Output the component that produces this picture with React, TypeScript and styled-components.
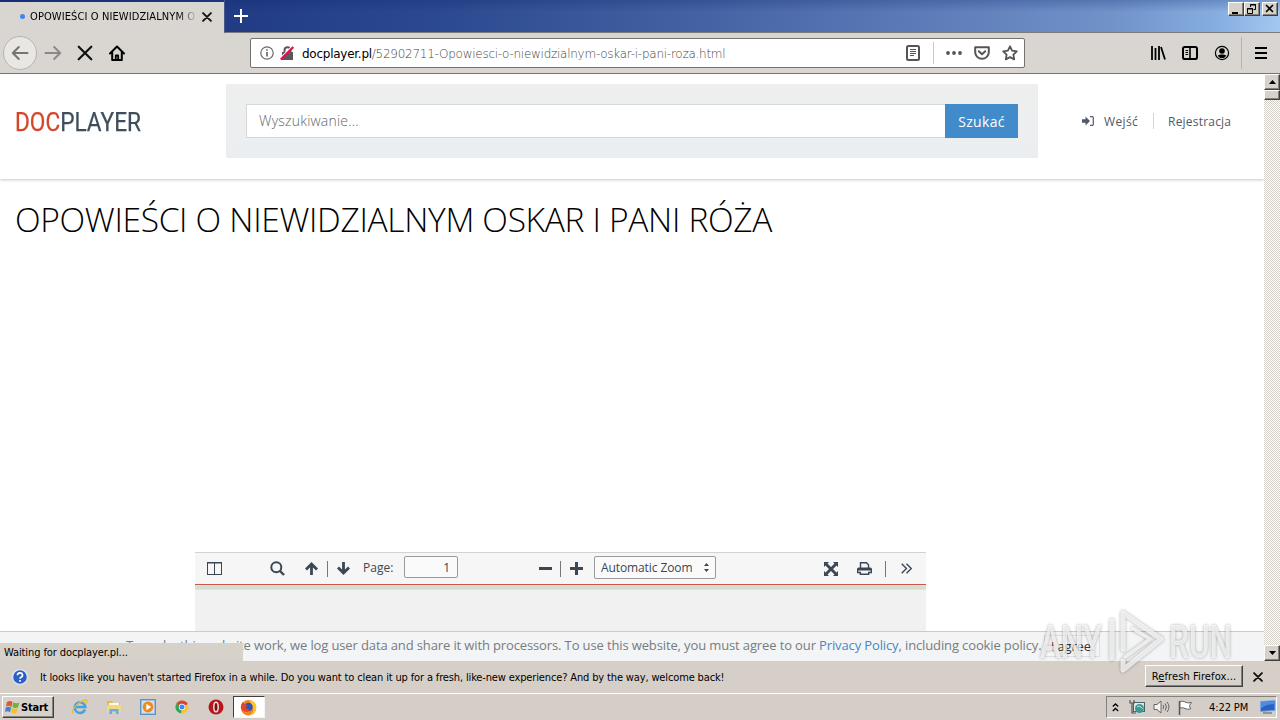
import React from "react";
import styled, { createGlobalStyle, css } from "styled-components";

const Global = createGlobalStyle`
  * { box-sizing: border-box; }
  body { margin: 0; background: #d4d0c8; overflow: hidden; }
`;

const ui = `"DejaVu Sans Condensed", "Noto Sans", sans-serif`;
const web = `"Open Sans", "Noto Sans", sans-serif`;

const Screen = styled.div`
  position: relative;
  width: 1280px;
  height: 720px;
  display: flex;
  flex-direction: column;
  overflow: hidden;
  font-family: ${ui};
  font-size: 11px;
  color: #000;
`;

const Label = styled.span<{ $ls?: number; $size?: number }>`
  white-space: pre;
  letter-spacing: ${(p) => p.$ls ?? 0}px;
  ${(p) => p.$size && css`font-size: ${p.$size}px;`}
`;

const Spacer = styled.div<{ $w?: number }>`
  flex: ${(p) => (p.$w === undefined ? "1" : `0 0 ${p.$w}px`)};
`;

/* ---------- window frame ---------- */
const TitleBar = styled.div`
  display: flex;
  height: 33px;
  background: linear-gradient(to bottom, rgba(10, 36, 106, 0.25), rgba(10, 36, 106, 0) 12px),
    linear-gradient(92deg, #16327a 0%, #213c84 18%, #2c4a90 35%, #4562a4 55%, #5d7bb8 72%, #7093c9 87%, #86ade0 95%, #a3c8f0 100%);
`;

const Tab = styled.div`
  display: flex;
  align-items: center;
  width: 224px;
  height: 31px;
  margin-top: 2px;
  padding: 0 10px 2px 20px;
  background: #d9d6d1;
`;

const TabRest = styled.div`
  flex: 1;
  display: flex;
  border-bottom: 1px solid #7c7c7c;
  border-left: 1px solid #47598c;
`;

const Dot = styled.i`
  width: 5px;
  height: 5px;
  margin-right: 5px;
  border-radius: 50%;
  background: #3f86f2;
`;

const TabTitle = styled.div`
  width: 165px;
  overflow: hidden;
  mask-image: linear-gradient(to right, #000 148px, transparent 168px);
`;

const NewTab = styled.div`
  padding: 8px 0 0 8px;
`;

const WinButtons = styled.div`
  display: flex;
  padding: 2px 2px 0 0;
`;

const raised = css`
  background: #d6d2cb;
  border: 1px solid;
  border-color: #fff #404040 #404040 #fff;
  box-shadow: inset -1px -1px 0 #85827c;
`;

const WinButton = styled.div<{ $gap?: boolean }>`
  ${raised}
  width: 16px;
  height: 14px;
  margin-left: ${(p) => (p.$gap ? 2 : 0)}px;
  svg { display: block; }
`;

const NavBar = styled.div`
  display: flex;
  align-items: center;
  height: 41px;
  border-bottom: 1px solid #75736f;
  background: #d9d6d1;
  padding-left: 3px;
  svg { display: block; }
`;

const BackButton = styled.div`
  display: grid;
  place-items: center;
  width: 34px;
  height: 34px;
  border: 1px solid #b8b5b0;
  border-radius: 50%;
  background: #e9e7e4;
`;

const UrlBar = styled.div`
  display: flex;
  align-items: center;
  width: 775px;
  height: 30px;
  padding: 0 6px 0 9px;
  border: 1px solid #74726e;
  border-radius: 2px;
  background: #fff;
`;

const UrlText = styled.div`
  flex: 1;
  margin: 1px 0 0 7px;
  font-family: "DejaVu Sans", sans-serif;
  font-size: 12px;
  font-weight: 200;
  color: #444;
  white-space: nowrap;
  letter-spacing: -0.26px;
  b { font-weight: 400; color: #000; }
`;

const VLine = styled.i<{ $h: number; $c: string }>`
  width: 1px;
  height: ${(p) => p.$h}px;
  background: ${(p) => p.$c};
`;

/* ---------- page ---------- */
const Viewport = styled.div`
  position: relative;
  display: flex;
  height: 587px;
`;

const Page = styled.div`
  flex: 1;
  display: flex;
  flex-direction: column;
  background: #fff;
  font-family: ${web};
  overflow: hidden;
`;

const Header = styled.header`
  display: flex;
  flex: 0 0 105px;
  padding: 10px 0 0 15px;
  box-shadow: 0 1px 3px rgba(0, 0, 0, 0.22);
`;

const Logo = styled.div`
  width: 211px;
  padding-top: 22px;
  font-family: Roboto, sans-serif;
  font-size: 25px;
  line-height: 33px;
  color: #3e4e5c;
  -webkit-text-stroke: 0.25px;
  span { display: inline-block; transform: scaleX(0.905); transform-origin: 0 50%; white-space: nowrap; }
  em { font-style: normal; color: #d4462a; }
`;

const SearchPanel = styled.div`
  display: flex;
  width: 812px;
  height: 74px;
  padding: 20px;
  background: linear-gradient(#eeeeee, #ebeef1);
`;

const SearchInput = styled.div`
  flex: 1;
  padding-left: 12px;
  border: 1px solid #d5d7d9;
  border-right: 0;
  background: #fff;
  font-size: 14px;
  font-weight: 300;
  line-height: 32px;
  color: #666;
  letter-spacing: 0.2px;
`;

const SearchButton = styled.div`
  width: 73px;
  background: #428bca;
  color: #fff;
  font-size: 14px;
  line-height: 35px;
  letter-spacing: 0.3px;
  text-align: center;
`;

const Account = styled.div`
  display: flex;
  align-items: center;
  height: 74px;
  padding-left: 44px;
  font-size: 12px;
  color: #4f5a66;
`;

const Title = styled.h1`
  flex: 1;
  margin: 0;
  padding: 16px 0 0 15px;
  font-size: 33.5px;
  line-height: 48px;
  font-weight: 300;
  letter-spacing: -0.32px;
  color: #000;
  white-space: nowrap;
`;

const Viewer = styled.section`
  width: 731px;
  height: 109px;
  margin-left: 195px;
  background: #f1f1f1;
`;

const ViewerBar = styled.div`
  display: flex;
  align-items: center;
  height: 33px;
  padding: 0 12px;
  border-top: 1px solid #d2d2d2;
  border-bottom: 1px solid #d0534a;
  background: #f6f6f6;
  font-size: 12px;
  color: #3b4754;
  svg { display: block; }
`;

const ViewerShade = styled.div`
  height: 5px;
  background: linear-gradient(#f3dcd6 0 1px, #d3dfd0 1px 4px, #e8e0e0 4px);
`;

const PageNumber = styled.div`
  width: 54px;
  height: 22px;
  margin-bottom: 3px;
  padding-right: 7px;
  border: 1px solid #9a9a9a;
  border-radius: 2px;
  background: #fafafa;
  line-height: 21px;
  text-align: right;
`;

const ZoomSelect = styled.div`
  display: flex;
  align-items: center;
  justify-content: space-between;
  width: 122px;
  height: 23px;
  margin-bottom: 3px;
  padding: 1px 5px 0 6px;
  border: 1px solid #9a9a9a;
  border-radius: 2px;
  background: #fafafa;
`;

const PageLabel = styled.div`
  padding-bottom: 2px;
`;

const CookieBar = styled.div`
  position: absolute;
  left: 0;
  bottom: 0;
  display: flex;
  width: 1264px;
  height: 30px;
  padding-left: 126px;
  border-top: 1px solid #c9cbcc;
  background: rgba(243, 244, 245, 0.96);
  font-family: ${web};
  font-size: 13px;
  line-height: 27px;
  color: #777c80;
  a { color: #4a88c4; }
`;

const Agree = styled.div`
  width: 56px;
  height: 22px;
  margin: 3px 0 0 3px;
  border: 1px solid #dedede;
  background: #f6f6f6;
  line-height: 20px;
  letter-spacing: -0.2px;
  text-align: center;
  color: #333;
`;

const StatusBubble = styled.div`
  position: absolute;
  left: 0;
  bottom: 0;
  width: 243px;
  height: 18px;
  padding-left: 4px;
  background: #d6d2c9;
  line-height: 20px;
`;

const ScrollTrack = styled.div`
  display: flex;
  flex-direction: column;
  width: 16px;
  background: repeating-conic-gradient(#ffffff 0 25%, #d4d0c8 0 50%) 0 0 / 2px 2px;
`;

const ScrollButton = styled.div<{ $h: number }>`
  ${raised}
  display: grid;
  place-items: center;
  height: ${(p) => p.$h}px;
`;

/* ---------- notification and taskbar ---------- */
const Notice = styled.div`
  display: flex;
  align-items: center;
  height: 32px;
  padding: 0 15px 0 12px;
  background: #d6cfc8;
`;

const NoticeButton = styled.div`
  ${raised}
  width: 98px;
  height: 22px;
  margin: -2px 0 0;
  line-height: 21px;
  text-align: center;
`;

const Taskbar = styled.div`
  display: flex;
  align-items: center;
  height: 27px;
  padding: 0 3px 0 2px;
  border-top: 1px solid #fff;
  background: #d5cec8;
  svg { display: block; }
`;

const StartButton = styled.div`
  ${raised}
  display: flex;
  align-items: center;
  width: 52px;
  height: 22px;
  padding-left: 2px;
  font-weight: 700;
`;

const TaskIcon = styled.div<{ $active?: boolean }>`
  display: grid;
  place-items: center;
  width: 34px;
  height: 22px;
  padding-right: 1px;
  ${(p) =>
    p.$active &&
    css`
      width: 32px;
      background: #fff;
      border: 1px solid;
      border-color: #404040 #f5f5f5 #f5f5f5 #404040;
    `}
`;

const Tray = styled.div`
  display: flex;
  align-items: center;
  width: 171px;
  height: 22px;
  padding-left: 5px;
  border: 1px solid;
  border-color: #85827c #fff #fff #85827c;
`;

const Watermark = styled.div`
  position: absolute;
  left: 1036px;
  top: 604px;
  display: flex;
  svg { filter: drop-shadow(0 0 1.5px rgba(0, 0, 0, 0.45)); }
`;

const Arrow = ({ flip }: { flip?: boolean }) => (
  <svg width="18" height="16" viewBox="0 0 18 16" fill="none" stroke={flip ? "#8b8986" : "#777572"} strokeWidth="2" strokeLinecap="round" strokeLinejoin="round">
    {flip ? <path d="M1.5 8H16M10.2 2l6 6-6 6" /> : <path d="M16.5 8H2M7.8 2l-6 6 6 6" />}
  </svg>
);

const Cross = ({ s, w = 2 }: { s: number; w?: number }) => (
  <svg width={s} height={s} viewBox="0 0 14 14" stroke="#111" strokeWidth={w} strokeLinecap="round">
    <path d="M1.5 1.5l11 11M12.5 1.5l-11 11" />
  </svg>
);

export default function App() {
  return (
    <>
      <Global />
      <Screen>
        <TitleBar>
          <Tab>
            <Dot />
            <TabTitle><Label $ls={0.1}>OPOWIEŚCI O NIEWIDZIALNYM O</Label></TabTitle>
            <Spacer $w={7} />
            <Cross s={10} w={2.6} />
          </Tab>
          <TabRest>
            <NewTab>
              <svg width="16" height="16" stroke="#fff" strokeWidth="2"><path d="M8 1v14M1 8h14" /></svg>
            </NewTab>
            <Spacer />
            <WinButtons>
              <WinButton><svg width="14" height="12"><path d="M3 9h6v2H3z" /></svg></WinButton>
              <WinButton>
                <svg width="14" height="12" fill="none" stroke="#000"><path d="M5.5 4V1.5h5v5H8.500M5 2h6M2.5 5.5h5v5h-5zM2 6h6" /></svg>
              </WinButton>
              <WinButton $gap><svg width="14" height="12" stroke="#000" strokeWidth="1.6"><path d="M3 2l7 7M10 2L3 9" /></svg></WinButton>
            </WinButtons>
          </TabRest>
        </TitleBar>

        <NavBar>
          <BackButton><Arrow /></BackButton>
          <Spacer $w={7} />
          <Arrow flip />
          <Spacer $w={15} />
          <Cross s={16} w={1.9} />
          <Spacer $w={16} />
          <svg width="16" height="16" viewBox="0 0 16 16" fill="none" stroke="#000" strokeWidth="2" strokeLinejoin="round" strokeLinecap="round">
            <path d="M1 8.5L8 1.5l7 7M3.2 7.5V15h9.6V7.5" />
            <path d="M6.8 14.5v-4h2.4v4" strokeWidth="1.8" />
          </svg>
          <Spacer $w={125} />
          <UrlBar>
            <svg width="14" height="14" fill="none" stroke="#6b6b6b" strokeWidth="1.2"><circle cx="7" cy="7" r="6.2" /><path d="M7 6v4.5M7 3.2v1.6" strokeWidth="1.7" /></svg>
            <Spacer $w={6} />
            <svg width="15" height="16" viewBox="0 0 15 16">
              <path d="M4.500 8V5.200a3 3 0 0 1 6 0V8" fill="none" stroke="#5a5a5a" strokeWidth="2" />
              <path d="M2 7h11v8H2z" fill="#5a5a5a" />
              <path d="M0 13.500L12.500 1" stroke="#fff" strokeWidth="1.500" />
              <path d="M.8 14.500L13.300 2" stroke="#e0124e" strokeWidth="2.300" />
            </svg>
            <UrlText><b>docplayer.pl</b>/52902711-Opowiesci-o-niewidzialnym-oskar-i-pani-roza.html</UrlText>
            <svg width="14" height="16" fill="none" stroke="#555"><rect x="1" y="1" width="12" height="14" rx="1.5" strokeWidth="2" /><path d="M4 4.5h6M4 6.5h6M4 8.5h6M4 10.5h4" /></svg>
            <Spacer $w={13} />
            <VLine $h={22} $c="#c9c9c9" />
            <Spacer $w={12} />
            <svg width="16" height="4" fill="#555"><circle cx="2" cy="2" r="1.9" /><circle cx="8" cy="2" r="1.9" /><circle cx="14" cy="2" r="1.9" /></svg>
            <Spacer $w={12} />
            <svg width="16" height="14" fill="none" stroke="#555" strokeWidth="2" strokeLinecap="round" strokeLinejoin="round"><path d="M1.2 1.2h13.6v5a6.8 6.6 0 0 1-13.6 0zM4.8 5.2L8 8.2l3.2-3" /></svg>
            <Spacer $w={12} />
            <svg width="16" height="16" viewBox="0 0 16 16" fill="none" stroke="#555" strokeWidth="1.8" strokeLinejoin="round"><path d="M8 1.3l2.1 4.3 4.7.7-3.4 3.3.8 4.8L8 12.1l-4.2 2.3.8-4.8L1.2 6.3l4.7-.7z" /></svg>
          </UrlBar>
          <Spacer />
          <svg width="16" height="14" stroke="#000"><path d="M2 0v14M5.500 2v12M9 0v14M11 1l4 12.500" strokeWidth="1.8" /></svg>
          <Spacer $w={16} />
          <svg width="16" height="14" fill="none" stroke="#000"><rect x="1" y="1" width="14" height="12" rx="1.8" strokeWidth="2" /><path d="M8 1v12" strokeWidth="1.6" /><path d="M3.500 4.500h2.600M3.500 6.500h2.600M3.500 8.500h2.600" /></svg>
          <Spacer $w={16} />
          <svg width="16" height="16"><circle cx="8" cy="8" r="6.6" fill="none" stroke="#000" strokeWidth="1.2" /><circle cx="8" cy="6" r="2.8" /><path d="M3.6 10.6c2-1.6 6.8-1.6 8.8 0a5.2 5.2 0 0 1-8.8 0z" /></svg>
          <Spacer $w={11} />
          <VLine $h={32} $c="#b7b4af" />
          <Spacer $w={13} />
          <svg width="12" height="12"><path d="M0 0h12v2H0zM0 5h12v2H0zM0 10h12v2H0z" /></svg>
          <Spacer $w={13} />
        </NavBar>

        <Viewport>
          <Page>
            <Header>
              <Logo><span><em>DOC</em>PLAYER</span></Logo>
              <SearchPanel>
                <SearchInput>Wyszukiwanie...</SearchInput>
                <SearchButton>Szukać</SearchButton>
              </SearchPanel>
              <Account>
                <svg width="12" height="10" fill="#4f5a66"><path d="M0 3.300h3.500V.6L8 5 3.500 9.400V6.700H0z" /><path d="M8 .7h2.300a1 1 0 0 1 1 1v6.600a1 1 0 0 1-1 1H8" fill="none" stroke="#4f5a66" strokeWidth="1.200" /></svg>
                <Spacer $w={10} />
                <Label $ls={0.35}>Wejść</Label>
                <Spacer $w={15} />
                <VLine $h={16} $c="#d2d4d6" />
                <Spacer $w={14} />
                <Label $ls={0.2}>Rejestracja</Label>
              </Account>
            </Header>
            <Title>OPOWIEŚCI O NIEWIDZIALNYM OSKAR I PANI RÓŻA</Title>
            <Viewer>
              <ViewerBar>
                <svg width="15" height="13" fill="none" stroke="#3b4754"><rect x=".5" y=".5" width="14" height="12" /><path d="M7.500 0v13M0 1h15" /></svg>
                <Spacer $w={48} />
                <svg width="15" height="15" fill="none" stroke="#3b4754" strokeWidth="2"><circle cx="6.300" cy="6.300" r="5" /><path d="M10 10l4 4" strokeWidth="2.400" /></svg>
                <Spacer $w={20} />
                <svg width="13" height="13" fill="none" stroke="#3b4754" strokeWidth="2.800"><path d="M6.500 13V2M1 7.500L6.500 2 12 7.500" /></svg>
                <Spacer $w={9} />
                <VLine $h={16} $c="#777" />
                <Spacer $w={9} />
                <svg width="13" height="13" fill="none" stroke="#3b4754" strokeWidth="2.800"><path d="M6.500 0v11M1 5.500L6.500 11 12 5.500" /></svg>
                <Spacer $w={13} />
                <PageLabel>Page:</PageLabel>
                <Spacer />
                <PageNumber>1</PageNumber>
                <Spacer $w={81} />
                <svg width="13" height="3" fill="#3b4754"><path d="M0 0h13v3H0z" /></svg>
                <Spacer $w={8} />
                <VLine $h={16} $c="#777" />
                <Spacer $w={9} />
                <svg width="13" height="13" fill="#3b4754"><path d="M5 0h3v5h5v3H8v5H5V8H0V5h5z" /></svg>
                <Spacer $w={11} />
                <ZoomSelect>
                  <Label $ls={-0.1}>Automatic Zoom</Label>
                  <svg width="7" height="9" fill="#444"><path d="M3.500 0L6 3H1zM3.500 9L6 6H1z" /></svg>
                </ZoomSelect>
                <Spacer $w={108} />
                <svg width="14" height="14" fill="#3b4754"><path d="M0 0h5L3.500 1.500 7 5l3.500-3.500L9 0h5v5l-1.500-1.500L9 7l3.500 3.500L14 9v5H9l1.500-1.500L7 9l-3.500 3.500L5 14H0V9l1.500 1.500L5 7 1.500 3.500 0 5z" /></svg>
                <Spacer $w={19} />
                <svg width="15" height="13" fill="none" stroke="#3b4754" strokeWidth="1.400"><path d="M3.500 6V.8h6l2 2V6" /><path d="M.7 10.500V7.300a1 1 0 0 1 1-1h11.600a1 1 0 0 1 1 1v3.200h-2.600v1.800H3.300v-1.800z" /><path d="M1 7.500h13" strokeWidth="2" /></svg>
                <Spacer $w={13} />
                <VLine $h={16} $c="#777" />
                <Spacer $w={15} />
                <svg width="11" height="11" fill="none" stroke="#3b4754" strokeWidth="1.400"><path d="M.7.7l4.800 4.800L.7 10.300M5.500.7l4.800 4.800-4.800 4.800" /></svg>
                <Spacer $w={2} />
              </ViewerBar>
              <ViewerShade />
            </Viewer>
          </Page>
          <ScrollTrack>
            <ScrollButton $h={16}><svg width="7" height="4"><path d="M3.500 0L7 4H0z" /></svg></ScrollButton>
            <ScrollButton $h={10} />
            <Spacer />
            <ScrollButton $h={16}><svg width="7" height="4"><path d="M3.500 4L7 0H0z" /></svg></ScrollButton>
          </ScrollTrack>
          <CookieBar>
            <Label $ls={-0.127}>To make this website work, we log user data and share it with processors. To use this website, you must agree to our <a>Privacy Policy</a>, including cookie policy.</Label>
            <Agree>I agree.</Agree>
          </CookieBar>
          <StatusBubble><Label $ls={-0.1}>Waiting for docplayer.pl...</Label></StatusBubble>
        </Viewport>

        <Notice>
          <svg width="16" height="16"><circle cx="8" cy="8" r="7.400" fill="#2b5fc4" stroke="#dfe8f7" strokeWidth="1.200" /><path d="M5.500 6.200a2.500 2.300 0 1 1 3.300 2.200Q8 8.800 8 9.700M8 11v1.700" fill="none" stroke="#fff" strokeWidth="1.700" /></svg>
          <Spacer $w={12} />
          <Label $ls={-0.143}>It looks like you haven't started Firefox in a while. Do you want to clean it up for a fresh, like-new experience? And by the way, welcome back!</Label>
          <Spacer />
          <NoticeButton><Label $ls={0.1}>R<u>e</u>fresh Firefox...</Label></NoticeButton>
          <Spacer $w={10} />
          <Cross s={10} w={2.600} />
          <Spacer $w={2} />
        </Notice>

        <Taskbar>
          <StartButton>
            <svg width="16" height="16"><path d="M2 3q3-2 5.500 0L6.500 8Q4 6 1 7.500z" fill="#e2572b" /><path d="M8.300 3.300q3 1.600 6 .2L13 8.300q-3 1.400-5.600-.2z" fill="#6cb33f" /><path d="M.8 8.400q3-1.600 5.400.2L5 13.300q-2.500-1.800-5-.2z" fill="#3f7fd6" /><path d="M7.100 8.900q3 1.500 5.700.2L11.500 14q-2.700 1.200-5.500-.4z" fill="#f5bf2c" /></svg>
            <Label $ls={-0.2}>Start</Label>
          </StartButton>
          <Spacer $w={9} />
          <TaskIcon>
            <svg width="18" height="18"><path d="M14 11.500A5.300 5.300 0 1 1 14.300 9H5" fill="none" stroke="#42a5e2" strokeWidth="2.600" /><path d="M2 15.500C-1 13 8 3 14 2c3-.3 2 2 1.200 3.200" fill="none" stroke="#e8b93a" strokeWidth="1.300" /></svg>
          </TaskIcon>
          <TaskIcon>
            <svg width="16" height="16"><path d="M1 2h5l1 2h7v9H1z" fill="#dcbb55" /><path d="M3 4h10v4H3z" fill="#fff8dc" /><path d="M1 6h14v7H1z" fill="#f0d983" /><path d="M3.500 15v-5h9v5H10v-2.500H6V15z" fill="#62aee0" /></svg>
          </TaskIcon>
          <TaskIcon>
            <svg width="16" height="16"><rect x=".7" y=".7" width="14.600" height="14.600" fill="#cfe1f1" stroke="#5b93c4" strokeWidth="1.400" /><circle cx="8" cy="8" r="5.400" fill="#ee8a1c" /><path d="M6.300 4.800v6.400L11.300 8z" fill="#fff" /></svg>
          </TaskIcon>
          <TaskIcon>
            <svg width="14" height="14"><circle cx="7" cy="7" r="6.500" fill="#f3c52e" /><path d="M7 7L1.200 4A6.500 6.500 0 0 1 12.800 4z" fill="#da4437" /><path d="M7 7l-1 6.400A6.500 6.500 0 0 1 1.200 4z" fill="#2fa35a" /><circle cx="7" cy="7" r="3.200" fill="#fff" /><circle cx="7" cy="7" r="2.500" fill="#4285f4" /></svg>
          </TaskIcon>
          <TaskIcon>
            <svg width="16" height="16"><circle cx="8" cy="8" r="7.500" fill="#b5171b" /><ellipse cx="8" cy="8" rx="2.200" ry="4.800" fill="#7d0f12" stroke="#f3dede" strokeWidth="1.500" /></svg>
          </TaskIcon>
          <TaskIcon $active>
            <svg width="17" height="17"><circle cx="8.500" cy="8.700" r="7.700" fill="#f5821f" /><path d="M9 1c5 .5 8.500 5 7 9.500-1 3.500-4 5.500-7 5.700 4-2 5-5 4-8-.8-3-3-4-4-7.200z" fill="#fdc729" /><circle cx="8.500" cy="8" r="4.200" fill="#2a57b5" /><path d="M.8 8Q1 4.500 3 3q.5 2 2.500 2.200L7.500 7 5.500 8.500q1 2.500 4.500 2-2 3.500-5.500 2T.8 8z" fill="#e8412c" /></svg>
          </TaskIcon>
          <Spacer />
          <Tray>
            <svg width="7" height="11" fill="none" stroke="#000" strokeWidth="1.300"><path d="M.8 4.500L3.500 2l2.700 2.500M.8 9L3.500 6.500 6.200 9" /></svg>
            <Spacer $w={10} />
            <svg width="17" height="16"><rect x="4.500" y="3.500" width="11" height="9" fill="#dfe9ec" stroke="#4c6268" /><circle cx="10.500" cy="9.500" r="4.500" fill="#3c9a94" /><path d="M8 8q2-2 4 0t2 2" stroke="#bfe5da" fill="none" /><path d="M1 1v3h4V1M3 4v10h4" stroke="#555" fill="none" strokeWidth="1.200" /></svg>
            <Spacer $w={7} />
            <svg width="17" height="14" fill="none" stroke="#666"><path d="M1 4.500h3L8 1v12L4 9.500H1z" fill="#f5f5f5" /><path d="M10 5q1.500 2 0 4M12 3.500q3 3.500 0 7M14 2q4 5 0 10" /></svg>
            <Spacer $w={7} />
            <svg width="17" height="15"><path d="M2.500 1v14" stroke="#555" strokeWidth="1.500" /><path d="M3 1.500q3-1 5 .5t6.500.5l-2 3 1 3.500q-3.500.8-5.500-.5T3 8z" fill="#fff" stroke="#666" /></svg>
            <Spacer $w={15} />
            <Label $ls={-0.1}>4:22 PM</Label>
            <Spacer />
            <svg width="16" height="14"><path d="M.5 1.500l14.500-1v10L.5 11.500z" fill="#2a62c4" stroke="#7da7e0" /><path d="M1 2l13.500-1v3Q7 4 1 8z" fill="#4f8be0" /><path d="M3 13h9" stroke="#555" /></svg>
          </Tray>
        </Taskbar>

        <Watermark>
          <svg width="204" height="72" viewBox="0 0 204 72">
            <g fill="#fff" fillOpacity=".7" fontFamily="Roboto, sans-serif" fontSize="46" fontWeight="500">
              <text x="4" y="54" textLength="62" lengthAdjust="spacingAndGlyphs">ANY</text>
              <text x="133" y="54" textLength="63" lengthAdjust="spacingAndGlyphs">RUN</text>
            </g>
            <g fill="none" stroke="#fff" strokeOpacity=".75" strokeWidth="5" strokeLinejoin="round" strokeLinecap="round">
              <path d="M76 17v37M87 45V9l38 26-38 31v-9" />
              <path d="M96 24l18 11-25 18" strokeWidth="3.500" />
            </g>
          </svg>
        </Watermark>
      </Screen>
    </>
  );
}
